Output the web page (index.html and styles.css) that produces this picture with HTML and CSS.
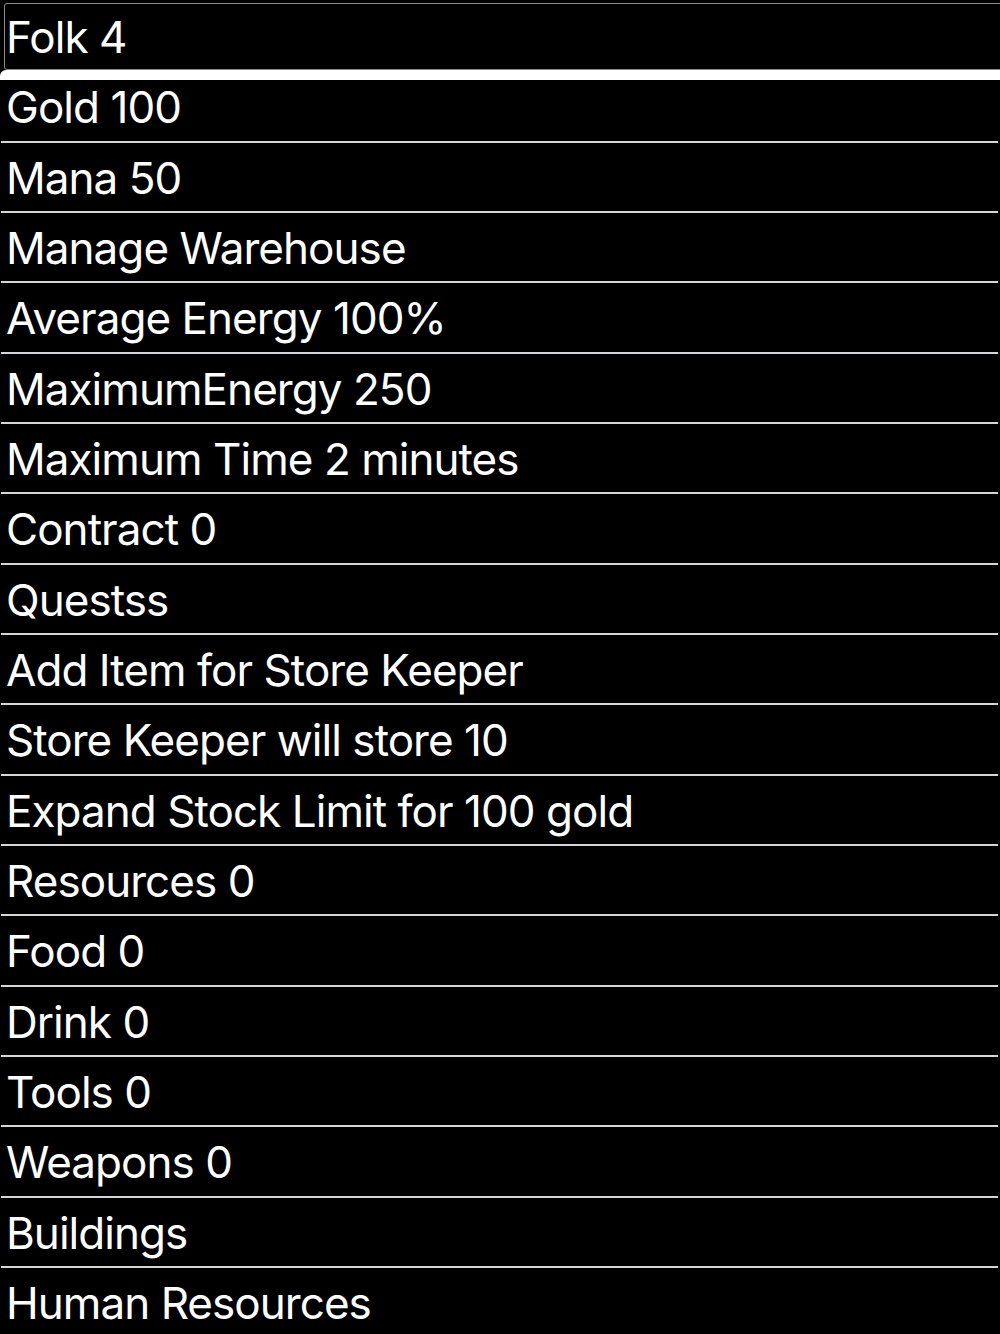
FILE: index.html
```html
<!DOCTYPE html>
<html lang="en">
<head>
<meta charset="utf-8">
<title>Warehouse</title>
<link rel="stylesheet" href="styles.css">
</head>
<body>
<ul class="list">
  <li class="row focused">Folk 4</li>
  <li class="row">Gold 100</li>
  <li class="row">Mana 50</li>
  <li class="row">Manage Warehouse</li>
  <li class="row">Average Energy 100%</li>
  <li class="row">MaximumEnergy 250</li>
  <li class="row">Maximum Time 2 minutes</li>
  <li class="row">Contract 0</li>
  <li class="row">Questss</li>
  <li class="row">Add Item for Store Keeper</li>
  <li class="row">Store Keeper will store 10</li>
  <li class="row">Expand Stock Limit for 100 gold</li>
  <li class="row">Resources 0</li>
  <li class="row">Food 0</li>
  <li class="row">Drink 0</li>
  <li class="row">Tools 0</li>
  <li class="row">Weapons 0</li>
  <li class="row">Buildings</li>
  <li class="row">Human Resources</li>
</ul>
</body>
</html>
```
FILE: styles.css
```css
html, body {
  margin: 0;
  padding: 0;
  background: #000;
}
body {
  width: 1000px;
  height: 1334px;
  overflow: hidden;
  font-family: Inter, "Noto Sans", sans-serif;
  color: #fff;
}
.list {
  list-style: none;
  margin: 0;
  padding: 2px 2px 0 1px;
}
.row {
  position: relative;
  box-sizing: border-box;
  height: 70.33px;
  padding: 2px 0 0 5px;
  font-size: 44px;
  line-height: 66.33px;
  letter-spacing: -0.95px;
  white-space: nowrap;
  border-bottom: 2px solid #d6d6da;
}
.row.focused {
  border-bottom-color: transparent;
}
.row.focused::before {
  content: "";
  position: absolute;
  left: 3px;
  top: 1px;
  right: -10px;
  height: 67px;
  box-sizing: border-box;
  border: 1.5px solid #8a8a8a;
  border-radius: 3px 0 0 3px;
}
.row.focused::after {
  content: "";
  position: absolute;
  left: -1px;
  right: -2px;
  top: 68px;
  height: 10px;
  background: #fff;
  border-top-left-radius: 6px;
}
```
